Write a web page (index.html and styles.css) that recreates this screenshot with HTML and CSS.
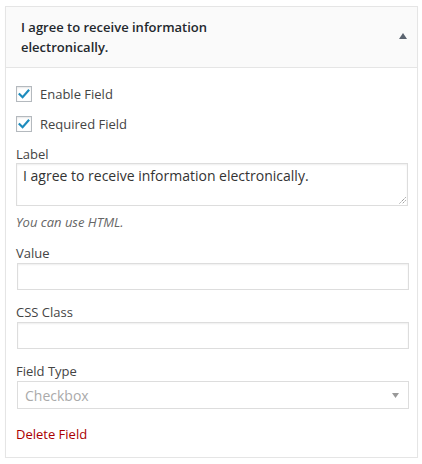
FILE: index.html
```html
<!DOCTYPE html>
<html>
<head>
<meta charset="utf-8">
<link rel="stylesheet" href="styles.css">
</head>
<body>
<div class="box">
  <div class="box-head">
    <div class="title">I agree to receive information electronically.</div>
    <svg class="toggle" width="8" height="6" viewBox="0 0 8 6"><polygon points="4,0 8,6 0,6" fill="#5b6470"/></svg>
  </div>
  <div class="box-body">
    <div class="check-row">
      <span class="cb"><svg width="14" height="14" viewBox="0 0 14 14"><path d="M2.6 7.2 L5.6 10.2 L11.4 3.6" fill="none" stroke="#1e8cbe" stroke-width="2.2" stroke-linecap="square"/></svg></span>
      <span class="cb-label">Enable Field</span>
    </div>
    <div class="check-row last">
      <span class="cb"><svg width="14" height="14" viewBox="0 0 14 14"><path d="M2.6 7.2 L5.6 10.2 L11.4 3.6" fill="none" stroke="#1e8cbe" stroke-width="2.2" stroke-linecap="square"/></svg></span>
      <span class="cb-label">Required Field</span>
    </div>
    <div class="group">
      <div class="label tight">Label</div>
      <div class="textarea">I agree to receive information electronically.<svg class="grip" width="8" height="8" viewBox="0 0 8 8"><path d="M7.5 1.5 L1.5 7.5 M7.5 4.5 L4.5 7.5" stroke="#555" stroke-width="0.9" stroke-dasharray="1 1"/></svg></div>
      <div class="hint">You can use HTML.</div>
    </div>
    <div class="group">
      <div class="label">Value</div>
      <div class="input"></div>
    </div>
    <div class="group">
      <div class="label">CSS Class</div>
      <div class="input"></div>
    </div>
    <div class="group">
      <div class="label">Field Type</div>
      <div class="input select"><span class="sel-text">Checkbox</span><svg width="7" height="5" viewBox="0 0 7 5"><polygon points="0,0 7,0 3.5,5" fill="#999"/></svg></div>
    </div>
    <div class="delete">Delete Field</div>
  </div>
</div>
</body>
</html>
```
FILE: styles.css
```css
html, body { margin: 0; padding: 0; background: #fff; }
body { font-family: "Open Sans", "Noto Sans", sans-serif; font-size: 13px; color: #444; }
.box {
  margin: 6px 0 0 5px;
  width: 413px;
  box-sizing: border-box;
  border: 1px solid #e5e5e5;
  box-shadow: 0 1px 1px rgba(0,0,0,.04);
  background: #fff;
}
.box-head {
  display: flex;
  justify-content: space-between;
  align-items: flex-start;
  background: #fafafa;
  border-bottom: 1px solid #e5e5e5;
  padding: 10px 10px 10px 15px;
}
.title {
  width: 250px;
  font-weight: 600;
  font-size: 13px;
  line-height: 20px;
  color: #23282d;
}
.toggle { margin-top: 16px; }
.box-body { padding: 16px 8px 14px 10px; }
.check-row {
  display: flex;
  align-items: center;
  height: 20px;
  margin-bottom: 10px;
}
.check-row.last { margin-bottom: 11px; }
.cb {
  width: 16px; height: 16px;
  box-sizing: border-box;
  border: 1px solid #b4b9be;
  box-shadow: inset 0 1px 2px rgba(0,0,0,.1);
  background: #fff;
  display: flex; align-items: center; justify-content: center;
  margin-right: 8px;
}
.cb-label { line-height: 20px; color: #444; }
.group { margin-bottom: 13px; }
.label { line-height: 18px; color: #444; margin-bottom: 1px; }
.label.tight { margin-bottom: 0; }
.textarea {
  position: relative;
  width: 392px; height: 43px;
  box-sizing: border-box;
  border: 1px solid #ddd;
  box-shadow: inset 0 1px 2px rgba(0,0,0,.07);
  padding: 2px 6px;
  font-size: 14px;
  line-height: 20px;
  color: #333;
}
.grip { position: absolute; right: 1px; bottom: 1px; }
.hint { font-style: italic; color: #666; line-height: 18px; margin-top: 7px; }
.input {
  width: 392px; height: 27px;
  margin-left: 1px;
  box-sizing: border-box;
  border: 1px solid #ddd;
  box-shadow: inset 0 1px 2px rgba(0,0,0,.07);
  background: #fff;
}
.select {
  height: 28px;
  display: flex; align-items: center; justify-content: space-between;
  padding: 0 9px 0 7px;
  font-size: 14px;
  color: #aaa;
  box-shadow: none;
}
.delete { color: #a00; line-height: 18px; margin-top: 16px; }
```
